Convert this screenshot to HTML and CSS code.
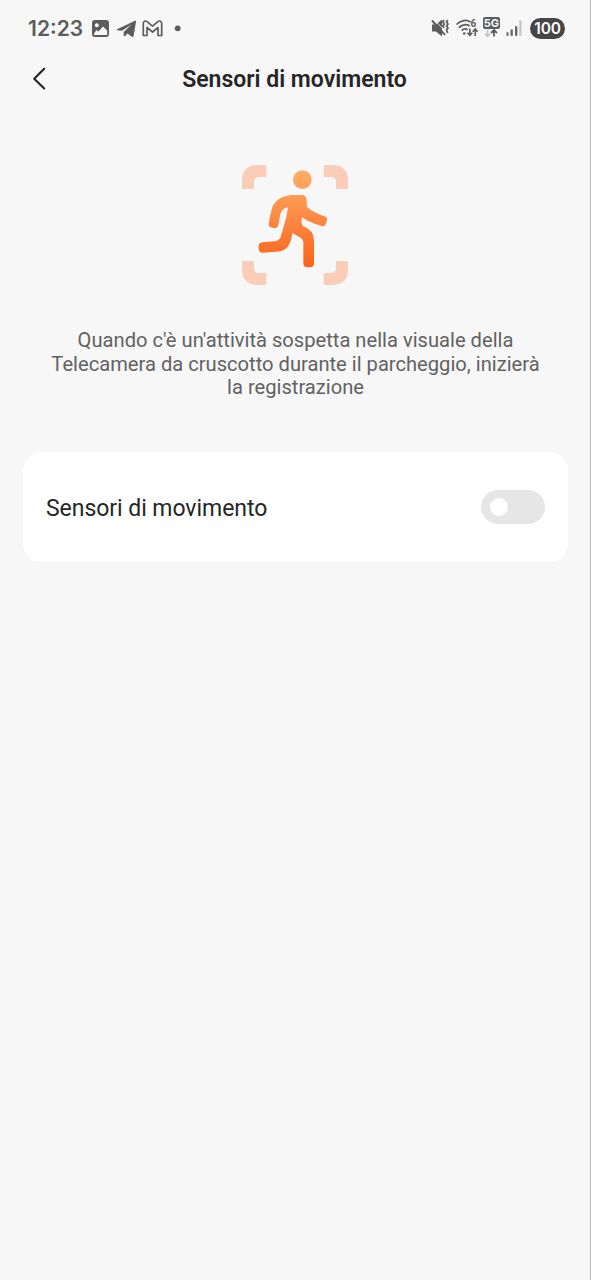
FILE: index.html
```html
<!DOCTYPE html>
<html lang="it">
<head>
<meta charset="utf-8">
<title>Sensori di movimento</title>
<link rel="stylesheet" href="styles.css">
</head>
<body>
<div class="screen">
  <header class="status">
    <span class="clock">12:23</span>
    <svg class="notifications" width="97" height="24" viewBox="0 0 97 24">
      <path fill="#5c5c5c" fill-rule="evenodd" d="M11 4H22a3 3 0 0 1 3 3V18a3 3 0 0 1-3 3H11a3 3 0 0 1-3-3V7a3 3 0 0 1 3-3ZM12.8 7.200a2 2 0 1 0 .01 0ZM10 17.500V19h13.200v-4.500L19 10.500 14.500 15.500 12.500 14Z"/>
      <path fill="#5c5c5c" d="M33 13.300 51 4.800a.8.8 0 0 1 1 .9l-2.500 14.500c-.2.900-1 1-1.700.5L43.500 17.500 41 20c-.7.600-1.300.4-1.300-.5V16L47.500 8.500 38 14.800 33 14.300Z"/>
      <path fill="none" stroke="#5c5c5c" stroke-width="1.700" stroke-linejoin="round" d="M59.300 19.500V7.500c0-2.400 2-3.200 3.800-1.800l5.400 4.500 5.400-4.500c1.800-1.400 3.800-.6 3.800 1.800v12H74V11.500l-5.500 4.500-5.500-4.500v8Z"/>
      <circle cx="93.700" cy="12.300" r="2.900" fill="#5c5c5c"/>
    </svg>
    <svg class="signals" width="95" height="28" viewBox="0 0 95 28">
      <g fill="none" stroke="#5c5c5c" stroke-width="1.800">
        <path fill="#5c5c5c" stroke="none" d="M3 10.500h4l6-5v17L7 17.500H3Z"/>
        <path stroke="#f7f7f7" stroke-width=".8" d="M5.200 5.500 17 18.300"/>
        <path stroke-width="2" d="M3 6.500 16 20.800"/>
        <path stroke-width="1.700" d="m15 6-1.200 2 1.500 2-1.500 2 1.300 2M18.700 6l-1.200 2 1.500 2-1.500 2 1.500 2-1.500 2 1.200 3"/>
        <path d="M27.500 10.500c4-4.300 10.200-5.300 14-2.400M29.800 13.700c3-3.300 7.700-3.900 10.800-1.800M32.700 16.700c1.700-1.900 4.200-2.200 6-.8"/>
        <circle cx="35.200" cy="19.500" r="1.300" fill="#5c5c5c" stroke="none"/>
        <path stroke-width="1.600" d="M40.900 14.500v6.800m-2.500-2.600 2.500 2.600 2.400-2.600M46.200 22v-7m-2.500 2.700 2.500-2.700 2.400 2.700"/>
      </g>
      <text x="41.500" y="13" class="wifi-gen">6</text>
      <rect x="54" y="3" width="17" height="12" rx="2" fill="#5c5c5c"/>
      <text x="62.500" y="13" text-anchor="middle" class="network">5G</text>
      <path fill="none" stroke="#c4c4c4" stroke-width="1.700" d="M58.600 15.500v6.700m-2.600-2.600 2.600 2.700 2.500-2.700"/>
      <path fill="none" stroke="#5c5c5c" stroke-width="1.800" d="M65 22.500v-6.500m-2.900 3 2.900-3 2.900 3"/>
      <path fill="#666" d="M77.500 18.300h2v3.500h-2ZM81.500 15.500h2.300v6.300h-2.300ZM86 12.300h2.300v9.500H86Z"/>
      <path fill="#c4c4c4" d="M90.300 6.500h2.200v15.300h-2.200Z"/>
    </svg>
    <span class="battery">100</span>
  </header>
  <nav class="topbar">
    <svg class="back" width="16" height="26" viewBox="0 0 16 26"><path d="M13.200 2.700 3.200 12.700l10 9.700" fill="none" stroke="#252525" stroke-width="2.100" stroke-linecap="round" stroke-linejoin="round"/></svg>
    <h1 class="title">Sensori di movimento</h1>
  </nav>
  <main>
    <svg class="hero" width="130" height="140" viewBox="0 0 390 420">
      <defs><linearGradient id="runner" gradientUnits="userSpaceOnUse" x1="0" y1="45" x2="0" y2="337"><stop stop-color="#ffae68"/><stop offset=".5" stop-color="#fc8844"/><stop offset="1" stop-color="#f9631b"/></linearGradient></defs>
      <g fill="#f9cdb7">
        <path d="M36 102V78Q36 30 84 30h20q5 0 5 5v27q0 4-4 4H88Q72 66 72 82v16q0 4-4 4Z"/>
        <path d="M354 102V78q0-48-48-48h-20q-5 0-5 5v27q0 4 4 4h17q16 0 16 16v16q0 4 4 4Z"/>
        <path d="M36 318v24q0 48 48 48h20q5 0 5-5v-27q0-4-4-4H88q-16 0-16-16v-16q0-4-4-4Z"/>
        <path d="M354 318v24q0 48-48 48h-20q-5 0-5-5v-27q0-4 4-4h17q16 0 16-16v-16q0-4 4-4Z"/>
      </g>
      <g fill="url(#runner)">
        <circle cx="217" cy="74" r="28"/>
        <path d="M190 120H216Q230 121 230 137V149Q230 157 237 161Q255 174 284 184Q293 187 291 195L287 208Q283 216 275 213Q236 202 216 187Q212 199 218 213Q252 224 252 258V325Q252 337 240 337H232Q220 337 220 325V260Q218 251 209 247L187 234Q183 270 165 283Q155 290 137 290L98 293Q87 293 86 282V273Q86 264 97 262L132 259Q147 258 152 246C159 220 168 197 174 157Q157 159 151 177L145 209Q143 221 131 219L122 217Q114 214 116 206Q119 182 127 157Q142 121 190 120Z"/>
      </g>
    </svg>
    <p class="description">Quando c'è un'attività sospetta nella visuale della<br>Telecamera da cruscotto durante il parcheggio, inizierà<br>la registrazione</p>
    <section class="card">
      <span class="label">Sensori di movimento</span>
      <span class="switch" role="switch" aria-checked="false"><span class="knob"></span></span>
    </section>
  </main>
</div>
</body>
</html>
```
FILE: styles.css
```css
* { box-sizing: border-box; }
body { margin: 0; background: #f7f7f7; font-family: Roboto, sans-serif; }
.screen { height: 1280px; border-right: 1px solid #b5b5b5; overflow: hidden; }
.status { display: flex; align-items: center; height: 56px; padding: 0 25px 0 28px; }
.clock { width: 56px; padding-top: 1px; font: 600 21px/28px Inter, sans-serif; color: #5c5c5c; white-space: nowrap; }
.notifications { flex: none; margin-top: -1px; }
.signals { flex: none; margin-left: auto; margin-right: 6px; }
.wifi-gen { font: 700 10px Roboto, sans-serif; fill: #5c5c5c; }
.network { font: 700 11px Inter, sans-serif; fill: #f7f7f7; }
.battery { width: 35px; height: 21px; border-radius: 11px; background: #464646; color: #fff; font: 600 15.500px/21px Inter, sans-serif; text-align: center; letter-spacing: -.2px; }
.topbar { display: grid; grid-template-columns: 50px 1fr 50px; align-items: center; height: 46px; padding-right: 1px; }
.back { margin-left: 31px; }
.title { margin: 0; padding-top: 2px; text-align: center; font-size: 23px; line-height: 30px; font-weight: 600; color: #252525; white-space: nowrap; }
.hero { display: block; margin: 53px auto 0 230px; }
.description { margin: 34px 0 0; padding-left: 1px; text-align: center; font-size: 20.150px; line-height: 23.600px; color: #626262; white-space: nowrap; }
.card { display: flex; align-items: center; justify-content: space-between; height: 110px; margin: 52px 22px 0 23px; padding: 0 23px; border-radius: 19px; background: #fff; }
.label { font-size: 23px; letter-spacing: -.05px; line-height: 30px; color: #252525; white-space: nowrap; padding-top: 4px; }
.switch { display: flex; align-items: center; width: 64px; height: 34px; padding-left: 9px; border-radius: 17px; background: #e6e6e6; }
.knob { width: 18px; height: 18px; border-radius: 50%; background: #fff; }
```
